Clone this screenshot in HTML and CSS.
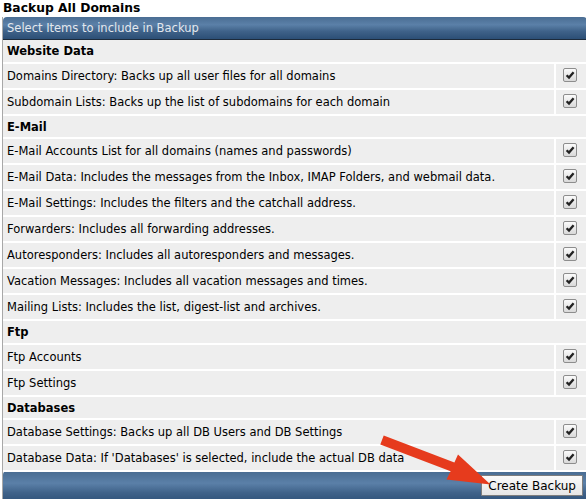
FILE: index.html
```html
<!DOCTYPE html>
<html lang="en">
  <head>
    <meta charset="UTF-8" />
    <title>Backup All Domains</title>
    <link rel="stylesheet" href="styles.css">
  </head>
  <body>
    <!-- Page title -->
    <div class="page-title">Backup All Domains</div>

    <div class="backup-box">
      <table class="backup-table">
        <tr>
          <td class="bar-head" colspan="2">Select Items to include in Backup</td>
        </tr>

        <!-- Website Data -->
        <tr class="section"><td colspan="2">Website Data</td></tr>
        <tr>
          <td class="label">Domains Directory: Backs up all user files for all domains</td>
          <td class="check"><span class="box"><svg viewBox="0 0 12 12"><path d="M2.6 6.2 L5 8.6 L9.6 3.2" /></svg></span></td>
        </tr>
        <tr>
          <td class="label">Subdomain Lists: Backs up the list of subdomains for each domain</td>
          <td class="check"><span class="box"><svg viewBox="0 0 12 12"><path d="M2.6 6.2 L5 8.6 L9.6 3.2" /></svg></span></td>
        </tr>

        <!-- E-Mail -->
        <tr class="section short"><td colspan="2">E-Mail</td></tr>
        <tr>
          <td class="label">E-Mail Accounts List for all domains (names and passwords)</td>
          <td class="check"><span class="box"><svg viewBox="0 0 12 12"><path d="M2.6 6.2 L5 8.6 L9.6 3.2" /></svg></span></td>
        </tr>
        <tr>
          <td class="label">E-Mail Data: Includes the messages from the Inbox, IMAP Folders, and webmail data.</td>
          <td class="check"><span class="box"><svg viewBox="0 0 12 12"><path d="M2.6 6.2 L5 8.6 L9.6 3.2" /></svg></span></td>
        </tr>
        <tr>
          <td class="label">E-Mail Settings: Includes the filters and the catchall address.</td>
          <td class="check"><span class="box"><svg viewBox="0 0 12 12"><path d="M2.6 6.2 L5 8.6 L9.6 3.2" /></svg></span></td>
        </tr>
        <tr>
          <td class="label">Forwarders: Includes all forwarding addresses.</td>
          <td class="check"><span class="box"><svg viewBox="0 0 12 12"><path d="M2.6 6.2 L5 8.6 L9.6 3.2" /></svg></span></td>
        </tr>
        <tr>
          <td class="label">Autoresponders: Includes all autoresponders and messages.</td>
          <td class="check"><span class="box"><svg viewBox="0 0 12 12"><path d="M2.6 6.2 L5 8.6 L9.6 3.2" /></svg></span></td>
        </tr>
        <tr>
          <td class="label">Vacation Messages: Includes all vacation messages and times.</td>
          <td class="check"><span class="box"><svg viewBox="0 0 12 12"><path d="M2.6 6.2 L5 8.6 L9.6 3.2" /></svg></span></td>
        </tr>
        <tr>
          <td class="label">Mailing Lists: Includes the list, digest-list and archives.</td>
          <td class="check"><span class="box"><svg viewBox="0 0 12 12"><path d="M2.6 6.2 L5 8.6 L9.6 3.2" /></svg></span></td>
        </tr>

        <!-- Ftp -->
        <tr class="section"><td colspan="2">Ftp</td></tr>
        <tr>
          <td class="label">Ftp Accounts</td>
          <td class="check"><span class="box"><svg viewBox="0 0 12 12"><path d="M2.6 6.2 L5 8.6 L9.6 3.2" /></svg></span></td>
        </tr>
        <tr>
          <td class="label">Ftp Settings</td>
          <td class="check"><span class="box"><svg viewBox="0 0 12 12"><path d="M2.6 6.2 L5 8.6 L9.6 3.2" /></svg></span></td>
        </tr>

        <!-- Databases -->
        <tr class="section short"><td colspan="2">Databases</td></tr>
        <tr>
          <td class="label">Database Settings: Backs up all DB Users and DB Settings</td>
          <td class="check"><span class="box"><svg viewBox="0 0 12 12"><path d="M2.6 6.2 L5 8.6 L9.6 3.2" /></svg></span></td>
        </tr>
        <tr>
          <td class="label">Database Data: If 'Databases' is selected, include the actual DB data</td>
          <td class="check"><span class="box"><svg viewBox="0 0 12 12"><path d="M2.6 6.2 L5 8.6 L9.6 3.2" /></svg></span></td>
        </tr>

        <tr>
          <td class="bar-foot" colspan="2"><button class="create-btn">Create Backup</button></td>
        </tr>
      </table>
    </div>

    <!-- Red pointer arrow drawn over the page -->
    <svg class="pointer" width="586" height="499" viewBox="0 0 586 499">
      <polygon points="383.7,435.6 454.4,462.6 458,454.5 490.5,484.5 446.5,479.5 450.6,471.2 380.3,444.4" />
    </svg>
  </body>
</html>
```

FILE: styles.css
```css
/* Global */
body {
  margin: 0;
  padding: 0 0 0 2px;
  font-family: "DejaVu Sans", Verdana, sans-serif;
  font-size: 11.5px;
  color: #000;
  background: #fff;
  position: relative;
  overflow: hidden;
  height: 499px;
}

/* Title */
.page-title {
  font-weight: bold;
  font-size: 12.3px;
  height: 17px;
  line-height: 17px;
  padding-left: 1px;
}

.backup-box {
  border-left: 1px solid #a8a8a8;
}

/* Table */
.backup-table {
  width: 584px;
  border-collapse: collapse;
}

.backup-table td {
  padding: 0 4px;
  background-color: #eeeeee;
  border-bottom: 2px solid #fff;
}

.bar-head,
.bar-foot {
  background: linear-gradient(#4a6d93 0%, #5b80a8 35%, #3f6289 65%, #2c4f76 100%) !important;
  color: #e3e8ee;
}

.bar-head {
  height: 22px;
  border-radius: 4px 4px 0 0;
  border-bottom: 1px solid #1d2b3b !important;
}

.section td {
  height: 22px;
  font-weight: bold;
}

.section.short td {
  height: 21px;
}

.label {
  height: 24px;
}

.check {
  width: 20px;
  text-align: left;
  padding-left: 7px !important;
  border-left: 2px solid #fff;
}

/* Fake checked checkbox */
.box {
  display: inline-block;
  width: 12px;
  height: 12px;
  border: 1px solid #8d8d8d;
  border-radius: 2px;
  background: linear-gradient(#fbfbfb, #d9d9d9);
  vertical-align: middle;
  position: relative;
  top: -1px;
}

.box svg {
  display: block;
  width: 12px;
  height: 12px;
}

.box path {
  fill: none;
  stroke: #222;
  stroke-width: 2.3;
}

/* Footer bar */
.bar-foot {
  height: 29px;
  text-align: right;
  vertical-align: top;
  padding-top: 3px !important;
  border-bottom: none !important;
  border-radius: 4px 4px 0 0;
}

.create-btn {
  font-family: "DejaVu Sans", Verdana, sans-serif;
  font-size: 12px;
  color: #000;
  height: 21px;
  padding: 0 6px;
  margin-right: 0;
  background: linear-gradient(#fafafa, #e6e6e6);
  border: 1px solid #7d7d7d;
  border-radius: 1px;
}

/* Arrow overlay */
.pointer {
  position: absolute;
  left: 0;
  top: 0;
  pointer-events: none;
}

.pointer polygon {
  fill: #e63b1d;
}
```
